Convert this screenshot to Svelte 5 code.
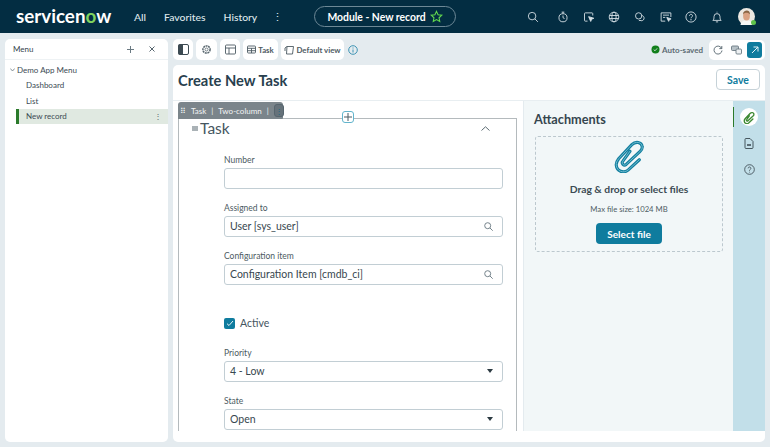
<script>
  const navIcons = ['search', 'timer', 'cursor', 'globe', 'chat', 'card', 'help', 'bell'];
  const menuItems = ['Dashboard', 'List'];
  const clipPath = 'M41 30 29 41C24 45 17 42 16.5 36 16 33 17.5 31 19 29L33 14C37 10 43.5 11 44 16 44.5 18.5 43 20 41.5 21.5L27 35C24.5 37 21.5 34 23.5 31.5L31 21';
</script>

{#snippet icon(name)}
  <svg class="ic" viewBox="0 0 16 16" fill="none" stroke="currentColor" stroke-width="1.2">
    {#if name === 'search'}
      <circle cx="6.8" cy="6.8" r="5"/><path d="M10.5 10.5l4 4"/>
    {:else if name === 'timer'}
      <circle cx="8" cy="9" r="5.4"/><path d="M6.2 1.5h3.6M8 1.5v2M8 6v3l2 1"/>
    {:else if name === 'cursor'}
      <path d="M6 13.5H3a1 1 0 0 1-1-1v-9a1 1 0 0 1 1-1h9a1 1 0 0 1 1 1V6"/><path d="M7.5 7.5l7 2.2-3 1.2-1.2 3z" fill="currentColor"/>
    {:else if name === 'globe'}
      <circle cx="8" cy="8" r="6.4"/><ellipse cx="8" cy="8" rx="2.8" ry="6.4"/><path d="M1.8 6h12.4M1.8 10h12.4"/>
    {:else if name === 'chat'}
      <circle cx="6.2" cy="6.5" r="4.2"/><path d="M10 6a3.5 3.5 0 1 1-2 6.4l-1.5.5"/>
    {:else if name === 'card'}
      <path d="M7 13.5H1.500v-11h13V8"/><path d="M4 5.500h8M4 8.500h3"/><path d="M9 8.500l5.800 2-2.300 1-1 2.300z" fill="currentColor"/>
    {:else if name === 'help'}
      <circle cx="8" cy="8" r="6.8"/><path d="M6 6.300a2 2 0 1 1 3 1.800c-.7.4-1 .8-1 1.600"/><circle cx="8" cy="11.800" r=".4"/>
    {:else if name === 'bell'}
      <path d="M2.500 12.500c1.300-1 1.500-2.500 1.500-5a4 4 0 0 1 8 0c0 2.500.2 4 1.500 5z"/><path d="M6.500 14.500h3M8 2V1"/>
    {/if}
  </svg>
{/snippet}

<div class="page">
  <header class="topbar">
    <div class="logo">servicen<i>o</i>w</div>
    <nav class="nav">
      <span>All</span>
      <span>Favorites</span>
      <span>History</span>
      <span class="kebab">⋮</span>
    </nav>
    <div class="pill">
      <span>Module - New record</span>
      <svg width="13" height="13" viewBox="0 0 24 24" fill="none" stroke="#62d84e" stroke-width="2">
        <path d="M12 2.500l2.900 6.300 6.800.8-5 4.700 1.300 6.800-6-3.400-6 3.400 1.300-6.800-5-4.700 6.800-.8z"/>
      </svg>
    </div>
    <div class="nav-icons">
      {#each navIcons as name, i}
        <span class="nav-icon" class:first={i === 0}>{@render icon(name)}</span>
      {/each}
      <span class="avatar">
        <svg width="17" height="17" viewBox="0 0 17 17">
          <circle cx="8.500" cy="8.500" r="8.500" fill="#ece8e2"/>
          <path d="M2.500 17c.5-3.500 2.500-4.500 6-4.500s5.500 1 6 4.500z" fill="#f7f7f5"/>
          <ellipse cx="8.500" cy="8" rx="3.400" ry="4.500" fill="#d9a283"/>
          <path d="M5 6.500C5 3.500 7 2.500 8.800 2.500c2 0 3.300 1.500 3.200 4-1-1.500-2.500-1.800-3.800-1.800-1.300 0-2.400.6-3.200 1.800z" fill="#8a6544"/>
        </svg>
        <i class="presence"></i>
      </span>
    </div>
  </header>

  <div class="workspace">
    <aside class="menu">
      <div class="menu-head">
        <span>Menu</span>
        <div class="menu-actions">
          <svg width="7" height="7" viewBox="0 0 7 7" stroke="#6b7a83" stroke-width="1"><path d="M3.500 0v7M0 3.500h7"/></svg>
          <svg width="6" height="6" viewBox="0 0 6 6" stroke="#56656e" stroke-width="1"><path d="M.5.500l5 5M5.500.500l-5 5"/></svg>
        </div>
      </div>
      <div class="tree">
        <div class="tree-root">
          <svg width="5" height="4" viewBox="0 0 5 4" fill="none" stroke="#6b7a83" stroke-width=".8"><path d="M.3.500 2.500 3 4.700.500"/></svg>
          Demo App Menu
        </div>
        {#each menuItems as item}
          <div class="tree-item">{item}</div>
        {/each}
        <div class="tree-item selected">New record<span class="row-kebab">⋮</span></div>
      </div>
    </aside>

    <main class="main">
      <div class="toolbar">
        <button class="tool" aria-label="Panel">
          <svg width="11" height="11" viewBox="0 0 11 11" fill="none" stroke="#3c4a52"><rect x=".5" y=".5" width="10" height="10" rx="1.500"/><rect x="1" y="1" width="3.500" height="9" fill="#3c4a52"/></svg>
        </button>
        <button class="tool wide" aria-label="Settings">
          <svg width="11" height="11" viewBox="0 0 11 11" fill="none" stroke="#59676f" stroke-width="1.500"><circle cx="5.500" cy="5.500" r="3.600" stroke-dasharray="2 .6"/><circle cx="5.500" cy="5.500" r="1.500" stroke-width=".8"/></svg>
        </button>
        <button class="tool" aria-label="Layout">
          <svg width="11" height="11" viewBox="0 0 11 11" fill="none" stroke="#4c5a62" stroke-width=".9"><rect x=".5" y="1" width="10" height="9" rx="1"/><path d="M.5 4h10M4 4v6"/></svg>
        </button>
        <button class="tool task">
          <svg width="9" height="9" viewBox="0 0 9 9" fill="none" stroke="#4c5a62" stroke-width=".9"><rect x=".5" y="1" width="8" height="7" rx=".8"/><path d="M.5 3.300h8M.5 5.700h8M4.500 3.300V8"/></svg>
          Task
        </button>
        <button class="tool view">
          <svg width="10" height="10" viewBox="0 0 10 10" fill="none" stroke="#4c5a62" stroke-width=".9"><path d="M3 1.500h6.500L8.500 9H2.500z"/><path d="M3 1.500 1 3v3"/></svg>
          Default view
        </button>
        <svg class="info" width="10" height="10" viewBox="0 0 10 10" fill="none" stroke="#3f94b4"><circle cx="5" cy="5" r="4.300"/><path d="M5 4.500V7.500M5 2.500v1"/></svg>
        <div class="saved">
          <svg width="9" height="9" viewBox="0 0 9 9"><circle cx="4.500" cy="4.500" r="4" fill="#12801c"/><path d="M2.700 4.600 4 5.800l2.200-2.500" stroke="#e4ebef" fill="none" stroke-width=".8"/></svg>
          Auto-saved
        </div>
        <div class="tool-group">
          <svg class="refresh" width="10" height="10" viewBox="0 0 10 10" fill="none" stroke="#56656e" stroke-width=".9"><path d="M8.700 3.500A4 4 0 1 0 9 5.500M8.800 1v2.600H6.300"/></svg>
          <svg width="11" height="10" viewBox="0 0 11 10" fill="none" stroke="#6b7a83" stroke-width=".9"><rect x=".5" y="1" width="7" height="4.500" rx="1" fill="#b8c2c8"/><rect x="5" y="4" width="5.500" height="5" rx="1" fill="#eef1f3"/></svg>
          <span class="launch">
            <svg width="8" height="8" viewBox="0 0 8 8" fill="none" stroke="#e7f4f8"><path d="M1 7l6-6M2.500 1H7v4.500"/></svg>
          </span>
        </div>
      </div>

      <section class="card">
        <div class="card-head">
          <h1>Create New Task</h1>
          <button class="save">Save</button>
        </div>

        <div class="card-body">
          <div class="form-area">
            <div class="badge">
              <span class="grip">⠿</span>
              <span>Task</span><span class="sep">|</span><span>Two-column</span><span class="sep">|</span>
              <span class="badge-more">⋮</span>
            </div>
            <span class="add">
              <svg width="8" height="8" viewBox="0 0 8 8" stroke="#4b5a62"><path d="M4 0v8M0 4h8"/></svg>
            </span>

            <div class="outline">
              <div class="section-head">
                <span class="handle"></span>
                <h2>Task</h2>
                <svg class="chev" width="9" height="5" viewBox="0 0 9 5" fill="none" stroke="#5b6a72"><path d="M.5 4.500 4.500.800l4 3.700"/></svg>
              </div>

              <div class="fields">
                <div class="field">
                  <div class="label">Number</div>
                  <div class="input"></div>
                </div>
                <div class="field">
                  <div class="label">Assigned to</div>
                  <div class="input">
                    User [sys_user]
                    <svg width="9" height="9" viewBox="0 0 9 9" fill="none" stroke="#75838b"><circle cx="3.700" cy="3.700" r="3"/><path d="M6 6l2.700 2.700"/></svg>
                  </div>
                </div>
                <div class="field">
                  <div class="label">Configuration item</div>
                  <div class="input">
                    Configuration Item [cmdb_ci]
                    <svg width="9" height="9" viewBox="0 0 9 9" fill="none" stroke="#75838b"><circle cx="3.700" cy="3.700" r="3"/><path d="M6 6l2.700 2.700"/></svg>
                  </div>
                </div>

                <div class="check-row">
                  <span class="check">
                    <svg width="8" height="7" viewBox="0 0 8 7" fill="none" stroke="#e8f5f8" stroke-width="1"><path d="M1 3.700 3 5.500 7 1"/></svg>
                  </span>
                  Active
                </div>

                <div class="field">
                  <div class="label">Priority</div>
                  <div class="input">4 - Low<i class="caret"></i></div>
                </div>
                <div class="field">
                  <div class="label">State</div>
                  <div class="input">Open<i class="caret"></i></div>
                </div>
              </div>
            </div>
          </div>

          <div class="attach">
            <h3>Attachments</h3>
            <div class="drop">
              <svg class="drop-clip" width="32" height="35" viewBox="13 7 34 37" fill="none" stroke-linecap="round">
                <path d={clipPath} stroke="#137f9f" stroke-width="3.300"/>
                <path d={clipPath} stroke="#7fc6d8" stroke-width=".9"/>
              </svg>
              <p class="drop-title">Drag &amp; drop or select files</p>
              <p class="drop-max">Max file size: 1024 MB</p>
              <button class="select">Select file</button>
            </div>
          </div>

          <div class="rail">
            <span class="rail-btn active">
              <svg width="12" height="13" viewBox="13 7 34 37" fill="none" stroke="#3f8a34" stroke-width="4" stroke-linecap="round"><path d={clipPath}/></svg>
            </span>
            <span class="rail-btn">
              <svg width="10" height="11" viewBox="0 0 10 11" fill="none" stroke="#39474f" stroke-width=".9"><path d="M1 1.500a1 1 0 0 1 1-1h4l3 3v6a1 1 0 0 1-1 1H2a1 1 0 0 1-1-1z"/><path d="M3 7h4" stroke-width="1.300"/></svg>
            </span>
            <span class="rail-btn">
              <svg width="11" height="11" viewBox="0 0 16 16" fill="none" stroke="#39474f" stroke-width="1.200"><circle cx="8" cy="8" r="7"/><path d="M6 6.300a2 2 0 1 1 3 1.800c-.7.4-1 .8-1 1.600M8 11.300v1"/></svg>
            </span>
          </div>
        </div>
      </section>
    </main>
  </div>
</div>

<style>
  :global(body) {
    margin: 0;
    background: #e4ebef;
    font-family: Lato, "Liberation Sans", sans-serif;
    overflow: hidden;
  }

  .page {
    width: 770px;
    height: 447px;
    display: flex;
    flex-direction: column;
    background: #e4ebef;
    color: #2f3f49;
    overflow: hidden;
  }

  /* top bar */
  .topbar {
    height: 33px;
    flex-shrink: 0;
    display: flex;
    align-items: center;
    background: #032d42;
    color: #eaf0f3;
    padding-left: 16px;
  }
  .logo {
    width: 96px;
    font-size: 18.8px;
    font-weight: 700;
    color: #fff;
    line-height: 1;
    white-space: nowrap;
  }
  .logo i {
    font-style: normal;
    color: #7fd35f;
  }
  .nav {
    width: 180px;
    display: flex;
    align-items: center;
    margin-left: 22px;
    gap: 18px;
    font-size: 10.4px;
    font-weight: 500;
    color: #dfe7eb;
  }
  .kebab { font-size: 11px; margin-left: -3px; }
  .pill {
    width: 142px;
    height: 21px;
    box-sizing: border-box;
    border: 1px solid #6d8896;
    border-radius: 11px;
    display: flex;
    align-items: center;
    justify-content: center;
    gap: 4px;
    font-size: 10.4px;
    font-weight: 700;
    color: #fff;
  }
  .nav-icons {
    display: flex;
    align-items: center;
    margin-left: 64px;
    color: #d5dfe4;
  }
  .nav-icon {
    width: 25.7px;
    display: flex;
    justify-content: center;
  }
  .nav-icon .ic { width: 12px; height: 12px; }
  .nav-icon.first { margin-right: 4.3px; }
  .avatar {
    position: relative;
    display: flex;
    margin-left: 8px;
  }
  .presence {
    position: absolute;
    right: -1px;
    bottom: 0;
    width: 5px;
    height: 5px;
    border-radius: 50%;
    background: #5fc24a;
  }

  .workspace {
    flex: 1;
    min-height: 0;
    display: flex;
    gap: 5px;
    padding: 6px 5px 5px;
  }

  /* left menu */
  .menu {
    width: 163px;
    flex-shrink: 0;
    background: #fff;
    border-radius: 5px;
    display: flex;
    flex-direction: column;
  }
  .menu-head {
    height: 20px;
    display: flex;
    align-items: center;
    justify-content: space-between;
    padding: 0 8px;
    font-size: 8px;
    color: #33424b;
    border-bottom: 1px solid #eef2f4;
  }
  .menu-actions {
    display: flex;
    align-items: center;
    gap: 15px;
    margin-right: 5px;
  }
  .tree {
    padding-top: 2px;
    font-size: 8px;
    color: #3c4b54;
  }
  .tree-root {
    height: 15.5px;
    display: flex;
    align-items: center;
    gap: 2px;
    padding-left: 5px;
  }
  .tree-item {
    height: 15.5px;
    display: flex;
    align-items: center;
    padding-left: 21px;
  }
  .selected {
    margin-left: 11px;
    padding-left: 7px;
    padding-right: 6px;
    justify-content: space-between;
    background: #e0e9e1;
    border-left: 3px solid #2b7a2b;
  }
  .row-kebab { font-size: 8px; color: #56656e; }

  /* main column */
  .main {
    flex: 1;
    min-width: 0;
    display: flex;
    flex-direction: column;
    gap: 5px;
  }
  .toolbar {
    height: 21px;
    flex-shrink: 0;
    display: flex;
    align-items: center;
    gap: 3px;
  }
  .tool {
    width: 20px;
    height: 21px;
    padding: 0;
    border: 0;
    background: #fff;
    border-radius: 5px;
    display: flex;
    align-items: center;
    justify-content: center;
    gap: 2px;
    font: 700 7.8px Lato, "Liberation Sans", sans-serif;
    color: #4c5a62;
  }
  .tool.wide { width: 21px; }
  .tool.task { width: 35px; }
  .tool.view { width: 63px; }
  .info { margin-left: 1px; }
  .saved {
    margin-left: auto;
    display: flex;
    align-items: center;
    gap: 2px;
    font-size: 8px;
    font-weight: 700;
    color: #5d6b73;
  }
  .tool-group {
    margin-left: 3px;
    width: 56px;
    height: 20px;
    box-sizing: border-box;
    background: #fff;
    border-radius: 5px;
    display: flex;
    align-items: center;
    justify-content: flex-end;
    gap: 5px;
    padding-right: 3px;
  }
  .refresh { margin-right: 3px; }
  .launch {
    width: 15px;
    height: 16px;
    background: #0f7c9e;
    border-radius: 3px;
    display: flex;
    align-items: center;
    justify-content: center;
  }

  /* card */
  .card {
    flex: 1;
    min-height: 0;
    background: #fff;
    border-radius: 5px;
    padding-bottom: 11px;
    display: flex;
    flex-direction: column;
    overflow: hidden;
  }
  .card-head {
    height: 36px;
    box-sizing: border-box;
    flex-shrink: 0;
    display: flex;
    align-items: center;
    justify-content: space-between;
    padding: 0 5px 6px;
    border-bottom: 1px solid #e8eef1;
  }
  h1 {
    margin: 0;
    font-size: 14.7px;
    font-weight: 700;
    color: #28404e;
  }
  .save {
    width: 44px;
    height: 21px;
    padding: 0;
    background: #fff;
    border: 1px solid #c6d2d8;
    border-radius: 4px;
    font: 700 10.5px Lato, "Liberation Sans", sans-serif;
    color: #0f7c9e;
  }
  .card-body {
    flex: 1;
    min-height: 0;
    display: flex;
  }

  /* form */
  .form-area {
    position: relative;
    width: 351px;
    flex-shrink: 0;
    box-sizing: border-box;
    padding: 17px 6px 0 5px;
    border-right: 1px solid #e4ebef;
    overflow: hidden;
  }
  .badge {
    position: absolute;
    left: 5px;
    top: 1px;
    width: 105px;
    height: 17px;
    box-sizing: border-box;
    display: flex;
    align-items: center;
    gap: 5px;
    padding-left: 2px;
    background: #7b858b;
    border-radius: 3px 3px 1px 0;
    font-size: 8px;
    color: #f2f4f5;
    white-space: nowrap;
    z-index: 1;
  }
  .grip { font-size: 8px; width: 9px; }
  .sep { color: #e8ecee; }
  .badge-more {
    width: 13px;
    height: 13px;
    margin-left: auto;
    margin-right: 1px;
    display: flex;
    align-items: center;
    justify-content: center;
    background: #66727a;
    border: 1px solid #56656e;
    border-radius: 3px;
    box-sizing: border-box;
    font-size: 8px;
    color: #1c6a82;
  }
  .add {
    position: absolute;
    left: 169px;
    top: 10px;
    width: 12px;
    height: 12px;
    box-sizing: border-box;
    background: #fff;
    border: 1px solid #62b4cc;
    border-radius: 3px;
    display: flex;
    align-items: center;
    justify-content: center;
    z-index: 1;
  }
  .outline {
    height: 400px;
    box-sizing: border-box;
    border: 1px solid #b4babd;
    padding: 0 13px;
  }
  .section-head {
    height: 19px;
    display: flex;
    align-items: center;
  }
  .handle {
    width: 6px;
    height: 5px;
    background: #aab2b6;
    margin-right: 2px;
  }
  h2 {
    margin: -2px 0 0;
    font-size: 15.5px;
    font-weight: 400;
    color: #45565f;
  }
  .chev { margin-left: auto; margin-right: 13px; }
  .fields {
    padding: 17px 0 0 32px;
    display: flex;
    flex-direction: column;
  }
  .field { margin-bottom: 14px; }
  .label {
    height: 13px;
    line-height: 11px;
    font-size: 8.5px;
    color: #4c5a62;
  }
  .input {
    height: 21px;
    box-sizing: border-box;
    border: 1px solid #c2ced4;
    border-radius: 3px;
    display: flex;
    align-items: center;
    justify-content: space-between;
    padding: 0 9px 1px 5px;
    font-size: 10.5px;
    color: #38474f;
    background: #fff;
  }
  .caret {
    width: 0;
    height: 0;
    border: 3.5px solid transparent;
    border-top: 4px solid #2c3a42;
    border-bottom: 0;
  }
  .check-row {
    height: 20px;
    margin: 14px 0 15px;
    display: flex;
    align-items: center;
    gap: 5px;
    font-size: 10.5px;
    color: #45555e;
  }
  .check {
    width: 11px;
    height: 11px;
    background: #0f7c9e;
    border-radius: 2px;
    display: flex;
    align-items: center;
    justify-content: center;
  }

  /* attachments */
  .attach {
    flex: 1;
    min-width: 0;
    background: #f2f7f8;
    padding: 0 10px;
  }
  h3 {
    margin: 10px 0 9px;
    height: 16px;
    line-height: 16px;
    font-size: 12.7px;
    font-weight: 700;
    color: #35454e;
  }
  .drop {
    height: 116px;
    margin-left: 1px;
    box-sizing: border-box;
    border: 1px dashed #bcc8ce;
    border-radius: 3px;
    display: flex;
    flex-direction: column;
    align-items: center;
  }
  .drop-clip { margin-top: 1px; }
  .drop-title {
    margin: 10px 0 0;
    font-size: 10.3px;
    font-weight: 700;
    color: #3c4b54;
  }
  .drop-max {
    margin: 9px 0 0;
    font-size: 7.7px;
    color: #4e5c64;
  }
  .select {
    margin-top: 9px;
    width: 66px;
    height: 21px;
    padding: 0;
    border: 0;
    border-radius: 4px;
    background: #0f7c9e;
    font: 700 10px Lato, "Liberation Sans", sans-serif;
    color: #fff;
  }

  /* rail */
  .rail {
    width: 32px;
    flex-shrink: 0;
    background: #c2dfe9;
    display: flex;
    flex-direction: column;
    align-items: center;
    padding-top: 7px;
    gap: 8px;
  }
  .rail-btn {
    width: 18px;
    height: 18px;
    display: flex;
    align-items: center;
    justify-content: center;
  }
  .rail-btn.active {
    position: relative;
    background: #fff;
    border-radius: 50%;
  }
  .rail-btn.active::before {
    content: "";
    position: absolute;
    left: -7px;
    top: -1px;
    width: 1px;
    height: 20px;
    background: #2b7a2b;
  }
</style>
